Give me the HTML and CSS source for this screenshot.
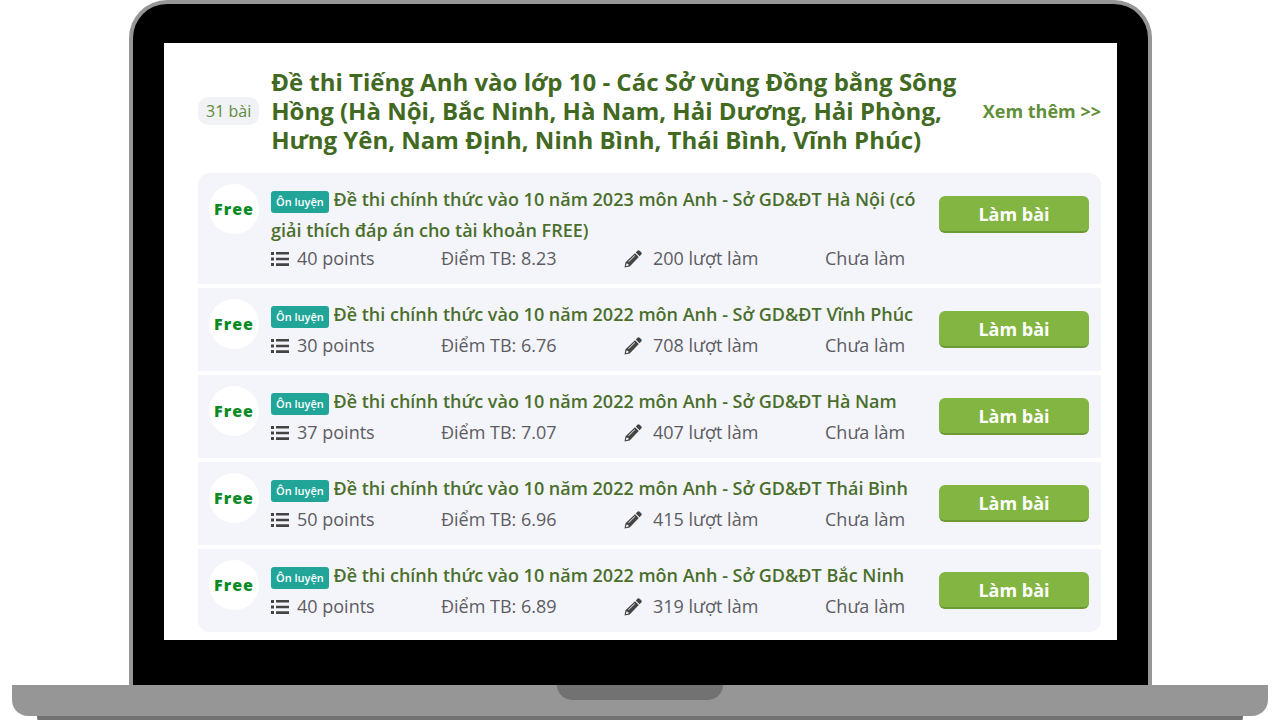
FILE: index.html
```html
<!DOCTYPE html>
<html lang="vi">
<head>
    <meta charset="UTF-8">
    <meta name="viewport" content="width=device-width, initial-scale=1.0">
    <title>Đề thi Tiếng Anh vào lớp 10</title>
    <link rel="stylesheet" href="styles.css">
</head>
<body>
    <!-- Icons used in every exam row -->
    <svg class="icon-defs" aria-hidden="true">
        <symbol id="icon-list" viewBox="0 0 18 18">
            <path d="M0 2h3v3H0zM0 7.500h3v3H0zM0 13h3v3H0zM5 2h13v2.600H5zM5 7.700h13v2.600H5zM5 13.300h13v2.600H5z"/>
        </symbol>
        <symbol id="icon-pencil" viewBox="0 0 18 18">
            <path d="M11.800 2.400 15.600 6.200 17.200 4.600c.8-.8.8-1.600 0-2.300L15.700.8c-.8-.8-1.600-.8-2.300 0z"/>
            <path fill-rule="evenodd" d="M11 3.200 14.800 7 5.700 16.400.5 17.600 1.500 12.200zM2.500 13.600 1.900 16.200l2.600-.6-.1-1.500zM10.600 5.300 4.300 11.600l.5.500 6.300-6.300z"/>
        </symbol>
    </svg>

    <div class="laptop">
        <div class="lid">
            <main class="screen">
                <header class="exam-header">
                    <span class="count">31 bài</span>
                    <h1>Đề thi Tiếng Anh vào lớp 10 - Các Sở vùng Đồng bằng Sông Hồng (Hà Nội, Bắc Ninh, Hà Nam, Hải Dương, Hải Phòng, Hưng Yên, Nam Định, Ninh Bình, Thái Bình, Vĩnh Phúc)</h1>
                    <a class="more" href="#">Xem thêm &gt;&gt;</a>
                </header>

                <ul class="exam-list">
                    <li class="exam">
                        <span class="free">Free</span>
                        <div class="exam-body">
                            <h2><span class="tag">Ôn luyện</span> <a href="#">Đề thi chính thức vào 10 năm 2023 môn Anh - Sở GD&amp;ĐT Hà Nội (có giải thích đáp án cho tài khoản FREE)</a></h2>
                            <div class="meta">
                                <span class="points"><svg><use href="#icon-list"/></svg>40 points</span>
                                <span class="average">Điểm TB: 8.23</span>
                                <span class="attempts"><svg><use href="#icon-pencil"/></svg>200 lượt làm</span>
                                <span>Chưa làm</span>
                            </div>
                        </div>
                        <button class="start" type="button">Làm bài</button>
                    </li>
                    <li class="exam">
                        <span class="free">Free</span>
                        <div class="exam-body">
                            <h2><span class="tag">Ôn luyện</span> <a href="#">Đề thi chính thức vào 10 năm 2022 môn Anh - Sở GD&amp;ĐT Vĩnh Phúc</a></h2>
                            <div class="meta">
                                <span class="points"><svg><use href="#icon-list"/></svg>30 points</span>
                                <span class="average">Điểm TB: 6.76</span>
                                <span class="attempts"><svg><use href="#icon-pencil"/></svg>708 lượt làm</span>
                                <span>Chưa làm</span>
                            </div>
                        </div>
                        <button class="start" type="button">Làm bài</button>
                    </li>
                    <li class="exam">
                        <span class="free">Free</span>
                        <div class="exam-body">
                            <h2><span class="tag">Ôn luyện</span> <a href="#">Đề thi chính thức vào 10 năm 2022 môn Anh - Sở GD&amp;ĐT Hà Nam</a></h2>
                            <div class="meta">
                                <span class="points"><svg><use href="#icon-list"/></svg>37 points</span>
                                <span class="average">Điểm TB: 7.07</span>
                                <span class="attempts"><svg><use href="#icon-pencil"/></svg>407 lượt làm</span>
                                <span>Chưa làm</span>
                            </div>
                        </div>
                        <button class="start" type="button">Làm bài</button>
                    </li>
                    <li class="exam">
                        <span class="free">Free</span>
                        <div class="exam-body">
                            <h2><span class="tag">Ôn luyện</span> <a href="#">Đề thi chính thức vào 10 năm 2022 môn Anh - Sở GD&amp;ĐT Thái Bình</a></h2>
                            <div class="meta">
                                <span class="points"><svg><use href="#icon-list"/></svg>50 points</span>
                                <span class="average">Điểm TB: 6.96</span>
                                <span class="attempts"><svg><use href="#icon-pencil"/></svg>415 lượt làm</span>
                                <span>Chưa làm</span>
                            </div>
                        </div>
                        <button class="start" type="button">Làm bài</button>
                    </li>
                    <li class="exam">
                        <span class="free">Free</span>
                        <div class="exam-body">
                            <h2><span class="tag">Ôn luyện</span> <a href="#">Đề thi chính thức vào 10 năm 2022 môn Anh - Sở GD&amp;ĐT Bắc Ninh</a></h2>
                            <div class="meta">
                                <span class="points"><svg><use href="#icon-list"/></svg>40 points</span>
                                <span class="average">Điểm TB: 6.89</span>
                                <span class="attempts"><svg><use href="#icon-pencil"/></svg>319 lượt làm</span>
                                <span>Chưa làm</span>
                            </div>
                        </div>
                        <button class="start" type="button">Làm bài</button>
                    </li>
                </ul>
            </main>
        </div>
        <div class="base">
            <div class="notch"></div>
        </div>
        <div class="foot"></div>
    </div>
</body>
</html>
```

FILE: styles.css
```css
* {
    box-sizing: border-box;
}

body {
    margin: 0;
    background-color: #fff;
    font-family: "Open Sans", "Noto Sans", sans-serif;
    overflow: hidden;
}

.icon-defs {
    display: none;
}

/* Laptop frame */
.laptop {
    padding: 0 12px;
}

.lid {
    margin: 0 116px 0 117px;
    padding: 39px 31px 45px;
    background-color: #000;
    border: 4px solid #969696;
    border-bottom: 0;
    border-radius: 38px 38px 0 0;
}

.base {
    height: 31px;
    background-color: #969696;
    border-radius: 0 0 16px 16px;
}

.notch {
    width: 166px;
    height: 15px;
    margin: 0 auto;
    background-color: #727272;
    border-radius: 0 0 16px 16px;
}

.foot {
    height: 16px;
    margin: 0 25px;
    background-color: #727272;
    border-radius: 0 0 16px 16px;
}

.screen {
    padding: 24px 16px 8px 34px;
    background-color: #fff;
}

/* Header */
.exam-header {
    display: flex;
    align-items: center;
    gap: 12px;
    margin-bottom: 19px;
}

.count {
    flex: none;
    padding: 0 8px;
    border-radius: 10px;
    background-color: #f1f2f6;
    color: #5f8a3c;
    font-size: 16px;
    line-height: 28px;
}

h1 {
    flex: 1;
    margin: 0;
    color: #41691f;
    font-size: 24px;
    font-weight: 700;
    line-height: 29px;
}

.more {
    color: #5f8f38;
    font-size: 18px;
    font-weight: 700;
    text-decoration: none;
    white-space: nowrap;
}

/* Exam list */
.exam-list {
    display: flex;
    flex-direction: column;
    gap: 4px;
    margin: 0;
    padding: 0;
    list-style: none;
    border-radius: 12px;
    overflow: hidden;
}

.exam {
    display: flex;
    align-items: flex-start;
    gap: 12px;
    padding: 11px 12px 13px 11px;
    background-color: #f4f5fa;
}

.free {
    flex: none;
    width: 50px;
    border-radius: 50%;
    background-color: #fff;
    color: #0b8a26;
    font-size: 16px;
    font-weight: 800;
    letter-spacing: 1px;
    line-height: 50px;
    text-align: center;
}

.exam-body {
    flex: 1;
}

h2 {
    min-height: 34px;
    margin: 0;
    font-size: 18px;
    font-weight: 600;
    line-height: 31px;
}

h2 a {
    color: #4a6f2c;
    text-decoration: none;
}

.tag {
    display: inline-block;
    padding: 0 5px;
    border-radius: 3px;
    background-color: #20a598;
    color: #fff;
    font-size: 11px;
    line-height: 22px;
}

.meta {
    display: flex;
    color: #5c5c62;
    font-size: 18px;
    line-height: 25px;
}

.meta span {
    display: flex;
    align-items: center;
}

.meta svg {
    width: 18px;
    height: 18px;
    fill: #444;
}

.points {
    width: 170px;
    gap: 8px;
}

.average {
    width: 183px;
}

.attempts {
    width: 201px;
    gap: 11px;
}

.start {
    width: 150px;
    height: 37px;
    margin-top: 12px;
    border: 0;
    border-bottom: 2px solid #6c9a35;
    border-radius: 6px;
    background-color: #82b541;
    color: #fff;
    font-family: inherit;
    font-size: 18px;
    font-weight: 700;
    cursor: pointer;
}
```
